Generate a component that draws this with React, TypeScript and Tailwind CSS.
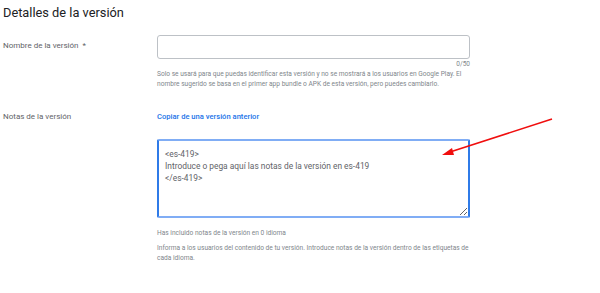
import { useState } from 'react';

// ─── Detalles de la versión ───────────────────────────────────────────────────

const NOTES = '<es-419>\nIntroduce o pega aquí las notas de la versión en es-419\n</es-419>';

function FieldRow({
  label,
  children,
  className = '',
}: {
  label: React.ReactNode;
  children: React.ReactNode;
  className?: string;
}) {
  return (
    <div className={`flex ${className}`}>
      <div className="w-[154px] shrink-0 text-[8px] leading-[12px] text-[#5f6368]">
        {label}
      </div>
      <div className="w-[313px]">{children}</div>
    </div>
  );
}

function ArrowOverlay() {
  return (
    <svg
      className="pointer-events-none absolute left-0 top-0"
      width="600"
      height="293"
      viewBox="0 0 600 293"
    >
      <line x1="552" y1="119" x2="450" y2="152" stroke="#f00e0e" strokeWidth="1.6" />
      <polygon points="442,155 452,148 454,155" fill="#f00e0e" />
    </svg>
  );
}

export default function App() {
  const [name, setName] = useState('');
  const [notes, setNotes] = useState(NOTES);

  return (
    <div
      className="relative h-[293px] w-[600px] overflow-hidden bg-white"
      style={{ fontFamily: 'Roboto, "Liberation Sans", sans-serif' }}
    >
      <div className="pl-[3px] pt-[5px]">
        <h1 className="text-[12.8px] leading-[16px] text-[#202124]">Detalles de la versión</h1>

        <FieldRow
          className="mt-[14px]"
          label={<div className="pt-[5px]">Nombre de la versión&nbsp; *</div>}
        >
          <input
            value={name}
            onChange={(e) => setName(e.target.value)}
            className="block h-[24px] w-full rounded-[3px] border border-[#bdc1c6] px-2 text-[8px] outline-none"
          />
          <div className="mt-[1px] text-right text-[6.5px] leading-[9px] text-[#80868b]">
            {name.length}/50
          </div>
          <p className="text-[6.6px] leading-[10px] text-[#80868b]">
            Solo se usará para que puedas identificar esta versión y no se mostrará a los usuarios en Google Play. El
            nombre sugerido se basa en el primer app bundle o APK de esta versión, pero puedes cambiarlo.
          </p>
        </FieldRow>

        <FieldRow className="mt-[22px]" label="Notas de la versión">
          <button className="block text-[7.6px] font-medium leading-[12px] text-[#1a73e8]">
            Copiar de una versión anterior
          </button>
          <textarea
            value={notes}
            onChange={(e) => setNotes(e.target.value)}
            className="mt-[16px] block h-[79px] w-full rounded-[2px] border-2 border-x-[#2f7be8] border-y-[#80adf5] px-[6px] pt-[7px] text-[8.4px] leading-[12px] text-[#5f6368] outline-none"
          />
          <p className="mt-[10px] text-[6.6px] leading-[10px] text-[#80868b]">
            Has incluido notas de la versión en 0 idioma
          </p>
          <p className="mt-[5px] text-[6.6px] leading-[10px] text-[#80868b]">
            Informa a los usuarios del contenido de tu versión. Introduce notas de la versión dentro de las etiquetas de
            cada idioma.
          </p>
        </FieldRow>
      </div>

      <ArrowOverlay />
    </div>
  );
}
